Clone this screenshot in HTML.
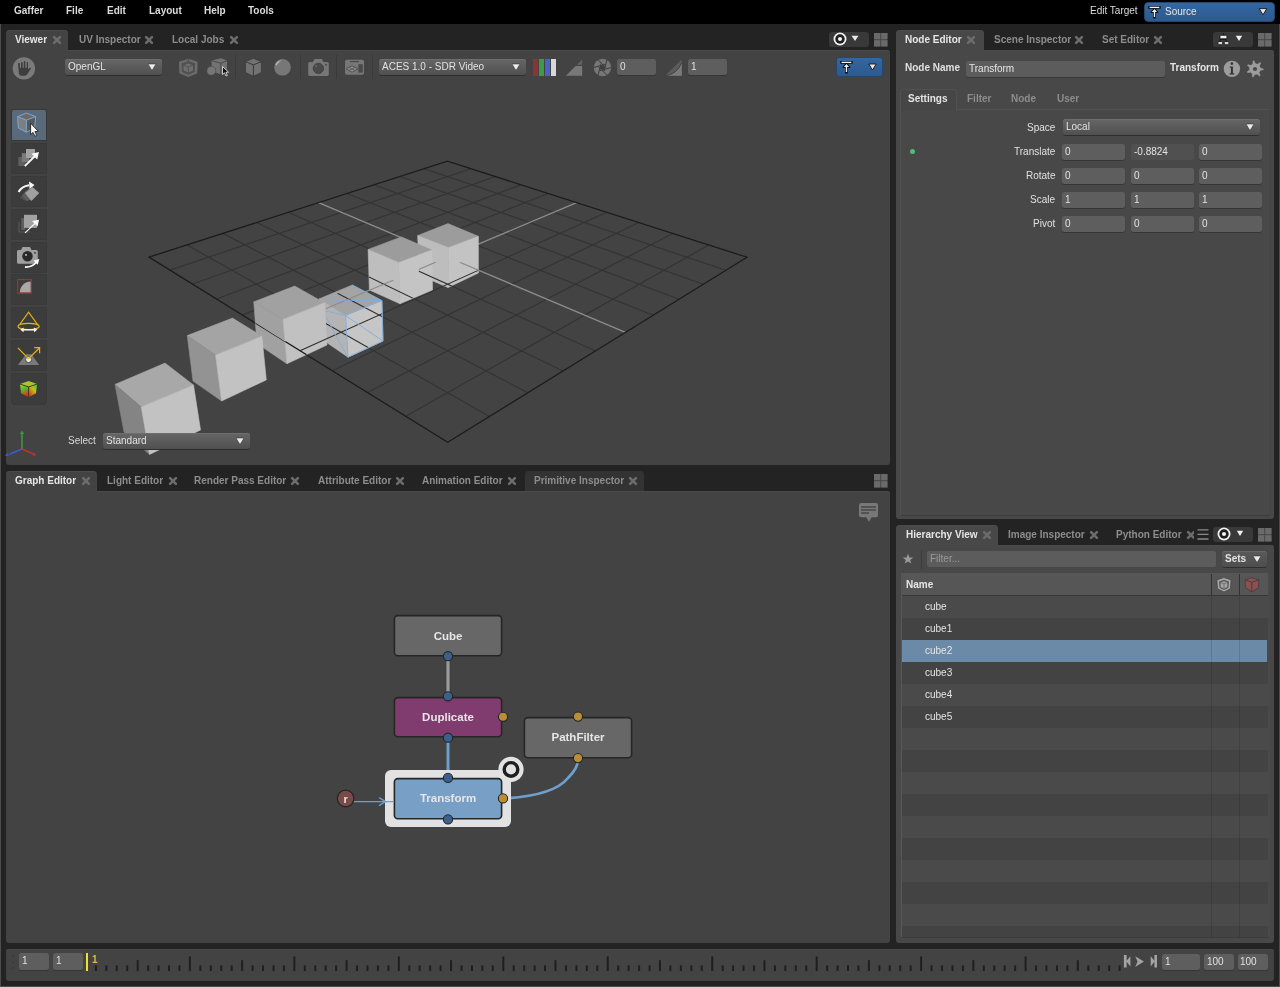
<!DOCTYPE html>
<html><head><meta charset="utf-8">
<style>
*{margin:0;padding:0;box-sizing:border-box}
html,body{width:1280px;height:987px;overflow:hidden;background:#232323;font-family:"Liberation Sans",sans-serif;font-size:10px;color:#e0e0e0}
.a{position:absolute}
.t{position:absolute;white-space:nowrap;font-family:"Liberation Sans",sans-serif;will-change:transform}
.wc{will-change:transform}
svg{overflow:visible}
</style></head><body>

<div class="a" style="left:0px;top:0px;width:1280px;height:24px;background:#000;"></div>
<div class="a" style="left:0px;top:24px;width:1px;height:963px;background:#4d4d4d;"></div>
<div class="a" style="left:1279px;top:24px;width:1px;height:963px;background:#4d4d4d;"></div>
<div class="a" style="left:0px;top:986px;width:1280px;height:1px;background:#4d4d4d;"></div>
<div class="t" style="left:14px;top:4.54px;line-height:12px;font-size:10px;color:#dcdcdc;font-weight:bold;">Gaffer</div>
<div class="t" style="left:66px;top:4.54px;line-height:12px;font-size:10px;color:#dcdcdc;font-weight:bold;">File</div>
<div class="t" style="left:107px;top:4.54px;line-height:12px;font-size:10px;color:#dcdcdc;font-weight:bold;">Edit</div>
<div class="t" style="left:149px;top:4.54px;line-height:12px;font-size:10px;color:#dcdcdc;font-weight:bold;">Layout</div>
<div class="t" style="left:204px;top:4.54px;line-height:12px;font-size:10px;color:#dcdcdc;font-weight:bold;">Help</div>
<div class="t" style="left:248px;top:4.54px;line-height:12px;font-size:10px;color:#dcdcdc;font-weight:bold;">Tools</div>
<div class="t" style="left:1090px;top:4.54px;line-height:12px;font-size:10px;color:#dcdcdc;">Edit Target</div>
<div class="a" style="left:1144px;top:2px;width:131px;height:20px;border-radius:4px;background:linear-gradient(#3466a0,#2d5a8e);border:1px solid #24476e"></div>
<div class="t" style="left:1165px;top:5.54px;line-height:12px;font-size:10px;color:#e6e6e6;">Source</div>
<svg class="a" style="left:1147.9px;top:5.1px" width="14" height="14" viewBox="0 0 14 14"><path d="M1.6 2.4 H11.3 M6.45 6.5 V12.1" stroke="#161616" stroke-width="2.9" stroke-linecap="square"/><path d="M6.45 3.2 L3.2 7.4 H9.7 Z" fill="#141414" stroke="#141414" stroke-width="1.4" stroke-linejoin="round"/><path d="M1.6 2.4 H11.3 M6.45 6.5 V12.1" stroke="#f2f2f2" stroke-width="1.3"/><path d="M6.45 3.9 L3.9 7.0 H9.0 Z" fill="#f2f2f2"/></svg>
<svg class="a" style="left:1258px;top:7px" width="10" height="9" viewBox="0 0 10 9"><path d="M1.2 1.6H8.8L5 7.8Z" fill="#e8e8e8" stroke="#151515" stroke-width="0.9" stroke-linejoin="round"/></svg>
<div class="a" style="left:6px;top:50px;width:884px;height:415px;background:#434343;border-radius:0 3px 3px 3px;box-shadow:inset 0 1px 0 #4a4a4a"></div>
<div class="a" style="left:6px;top:30px;width:62px;height:21px;background:#434343;border-radius:4px 4px 0 0;box-shadow:inset 0 1px 0 #4b4b4b"></div>
<div class="t" style="left:15px;top:33.53px;line-height:12px;font-size:10px;color:#e6e6e6;font-weight:bold;">Viewer</div>
<svg class="a" style="left:51.7px;top:35.2px" width="10" height="10" viewBox="0 0 10 10"><path d="M2.1 2.1L7.9 7.9M7.9 2.1L2.1 7.9" stroke="#6c6c6c" stroke-width="2.6" stroke-linecap="round"/></svg>
<div class="t" style="left:78.5px;top:33.53px;line-height:12px;font-size:10px;color:#8d8d8d;font-weight:bold;">UV Inspector</div>
<svg class="a" style="left:144.2px;top:35.2px" width="10" height="10" viewBox="0 0 10 10"><path d="M2.1 2.1L7.9 7.9M7.9 2.1L2.1 7.9" stroke="#6c6c6c" stroke-width="2.6" stroke-linecap="round"/></svg>
<div class="t" style="left:171.5px;top:33.53px;line-height:12px;font-size:10px;color:#8d8d8d;font-weight:bold;">Local Jobs</div>
<svg class="a" style="left:228.7px;top:35.2px" width="10" height="10" viewBox="0 0 10 10"><path d="M2.1 2.1L7.9 7.9M7.9 2.1L2.1 7.9" stroke="#6c6c6c" stroke-width="2.6" stroke-linecap="round"/></svg>
<div class="a" style="left:6px;top:491px;width:884px;height:452px;background:#434343;border-radius:0 3px 3px 3px;box-shadow:inset 0 1px 0 #4a4a4a"></div>
<div class="a" style="left:6px;top:471px;width:91px;height:21px;background:#434343;border-radius:4px 4px 0 0;box-shadow:inset 0 1px 0 #4b4b4b"></div>
<div class="t" style="left:15px;top:474.54px;line-height:12px;font-size:10px;color:#e6e6e6;font-weight:bold;">Graph Editor</div>
<svg class="a" style="left:80.7px;top:476.2px" width="10" height="10" viewBox="0 0 10 10"><path d="M2.1 2.1L7.9 7.9M7.9 2.1L2.1 7.9" stroke="#6c6c6c" stroke-width="2.6" stroke-linecap="round"/></svg>
<div class="t" style="left:107px;top:474.54px;line-height:12px;font-size:10px;color:#8d8d8d;font-weight:bold;">Light Editor</div>
<svg class="a" style="left:167.7px;top:476.2px" width="10" height="10" viewBox="0 0 10 10"><path d="M2.1 2.1L7.9 7.9M7.9 2.1L2.1 7.9" stroke="#6c6c6c" stroke-width="2.6" stroke-linecap="round"/></svg>
<div class="t" style="left:194px;top:474.54px;line-height:12px;font-size:10px;color:#8d8d8d;font-weight:bold;">Render Pass Editor</div>
<svg class="a" style="left:289.7px;top:476.2px" width="10" height="10" viewBox="0 0 10 10"><path d="M2.1 2.1L7.9 7.9M7.9 2.1L2.1 7.9" stroke="#6c6c6c" stroke-width="2.6" stroke-linecap="round"/></svg>
<div class="t" style="left:317.5px;top:474.54px;line-height:12px;font-size:10px;color:#8d8d8d;font-weight:bold;">Attribute Editor</div>
<svg class="a" style="left:394.7px;top:476.2px" width="10" height="10" viewBox="0 0 10 10"><path d="M2.1 2.1L7.9 7.9M7.9 2.1L2.1 7.9" stroke="#6c6c6c" stroke-width="2.6" stroke-linecap="round"/></svg>
<div class="t" style="left:421.5px;top:474.54px;line-height:12px;font-size:10px;color:#8d8d8d;font-weight:bold;">Animation Editor</div>
<svg class="a" style="left:506.7px;top:476.2px" width="10" height="10" viewBox="0 0 10 10"><path d="M2.1 2.1L7.9 7.9M7.9 2.1L2.1 7.9" stroke="#6c6c6c" stroke-width="2.6" stroke-linecap="round"/></svg>
<div class="a" style="left:525px;top:471px;width:119px;height:20px;background:#333;border-radius:4px 4px 0 0"></div>
<div class="t" style="left:533.5px;top:474.54px;line-height:12px;font-size:10px;color:#8d8d8d;font-weight:bold;">Primitive Inspector</div>
<svg class="a" style="left:627.7px;top:476.2px" width="10" height="10" viewBox="0 0 10 10"><path d="M2.1 2.1L7.9 7.9M7.9 2.1L2.1 7.9" stroke="#6c6c6c" stroke-width="2.6" stroke-linecap="round"/></svg>
<div class="a" style="left:896px;top:50px;width:378px;height:469px;background:#484848;border-radius:0 3px 3px 3px;box-shadow:inset 0 1px 0 #4a4a4a"></div>
<div class="a" style="left:896px;top:30px;width:88px;height:21px;background:#484848;border-radius:4px 4px 0 0;box-shadow:inset 0 1px 0 #4b4b4b"></div>
<div class="t" style="left:905px;top:33.53px;line-height:12px;font-size:10px;color:#e6e6e6;font-weight:bold;">Node Editor</div>
<svg class="a" style="left:965.7px;top:35.2px" width="10" height="10" viewBox="0 0 10 10"><path d="M2.1 2.1L7.9 7.9M7.9 2.1L2.1 7.9" stroke="#6c6c6c" stroke-width="2.6" stroke-linecap="round"/></svg>
<div class="t" style="left:993.5px;top:33.53px;line-height:12px;font-size:10px;color:#8d8d8d;font-weight:bold;">Scene Inspector</div>
<svg class="a" style="left:1073.7px;top:35.2px" width="10" height="10" viewBox="0 0 10 10"><path d="M2.1 2.1L7.9 7.9M7.9 2.1L2.1 7.9" stroke="#6c6c6c" stroke-width="2.6" stroke-linecap="round"/></svg>
<div class="t" style="left:1101.5px;top:33.53px;line-height:12px;font-size:10px;color:#8d8d8d;font-weight:bold;">Set Editor</div>
<svg class="a" style="left:1152.7px;top:35.2px" width="10" height="10" viewBox="0 0 10 10"><path d="M2.1 2.1L7.9 7.9M7.9 2.1L2.1 7.9" stroke="#6c6c6c" stroke-width="2.6" stroke-linecap="round"/></svg>
<div class="a" style="left:896px;top:545px;width:378px;height:398px;background:#484848;border-radius:0 3px 3px 3px;box-shadow:inset 0 1px 0 #4a4a4a"></div>
<div class="a" style="left:896px;top:525px;width:102px;height:21px;background:#484848;border-radius:4px 4px 0 0;box-shadow:inset 0 1px 0 #4b4b4b"></div>
<div class="t" style="left:905.5px;top:528.53px;line-height:12px;font-size:10px;color:#e6e6e6;font-weight:bold;">Hierarchy View</div>
<svg class="a" style="left:981.7px;top:530.2px" width="10" height="10" viewBox="0 0 10 10"><path d="M2.1 2.1L7.9 7.9M7.9 2.1L2.1 7.9" stroke="#6c6c6c" stroke-width="2.6" stroke-linecap="round"/></svg>
<div class="t" style="left:1008px;top:528.53px;line-height:12px;font-size:10px;color:#8d8d8d;font-weight:bold;">Image Inspector</div>
<svg class="a" style="left:1088.7px;top:530.2px" width="10" height="10" viewBox="0 0 10 10"><path d="M2.1 2.1L7.9 7.9M7.9 2.1L2.1 7.9" stroke="#6c6c6c" stroke-width="2.6" stroke-linecap="round"/></svg>
<div class="t" style="left:1116px;top:528.53px;line-height:12px;font-size:10px;color:#8d8d8d;font-weight:bold;">Python Editor</div>
<svg class="a" style="left:1185.7px;top:530.2px" width="10" height="10" viewBox="0 0 10 10"><path d="M2.1 2.1L7.9 7.9M7.9 2.1L2.1 7.9" stroke="#6c6c6c" stroke-width="2.6" stroke-linecap="round"/></svg>
<div class="a" style="left:1194px;top:528px;width:3px;height:14px;background:#232323;"></div>
<div class="a" style="left:6px;top:949px;width:1268px;height:32px;background:#434343;border-radius:3px;box-shadow:inset 0 1px 0 #4a4a4a"></div>
<svg class="a" style="left:0;top:0" width="890" height="464" viewBox="0 0 890 464">
<line x1="489.58" y1="416.39" x2="187.07" y2="244.88" stroke="#333" stroke-width="1.15"/>
<line x1="405.89" y1="416.30" x2="708.71" y2="244.98" stroke="#333" stroke-width="1.15"/>
<line x1="527.88" y1="392.72" x2="222.87" y2="233.38" stroke="#333" stroke-width="1.15"/>
<line x1="367.60" y1="392.57" x2="672.73" y2="233.44" stroke="#333" stroke-width="1.15"/>
<line x1="563.06" y1="370.97" x2="256.61" y2="222.54" stroke="#333" stroke-width="1.15"/>
<line x1="332.44" y1="370.79" x2="638.83" y2="222.58" stroke="#333" stroke-width="1.15"/>
<line x1="595.49" y1="350.92" x2="288.47" y2="212.32" stroke="#333" stroke-width="1.15"/>
<line x1="300.05" y1="350.71" x2="606.86" y2="212.33" stroke="#333" stroke-width="1.15"/>
<line x1="653.31" y1="315.17" x2="347.10" y2="193.49" stroke="#333" stroke-width="1.15"/>
<line x1="242.36" y1="314.96" x2="548.05" y2="193.48" stroke="#333" stroke-width="1.15"/>
<line x1="679.19" y1="299.17" x2="374.15" y2="184.80" stroke="#333" stroke-width="1.15"/>
<line x1="216.55" y1="298.97" x2="520.95" y2="184.79" stroke="#333" stroke-width="1.15"/>
<line x1="703.32" y1="284.25" x2="399.83" y2="176.56" stroke="#333" stroke-width="1.15"/>
<line x1="192.51" y1="284.06" x2="495.22" y2="176.55" stroke="#333" stroke-width="1.15"/>
<line x1="725.87" y1="270.31" x2="424.25" y2="168.72" stroke="#333" stroke-width="1.15"/>
<line x1="170.04" y1="270.14" x2="470.77" y2="168.71" stroke="#333" stroke-width="1.15"/>
<line x1="625.48" y1="332.37" x2="318.58" y2="202.65" stroke="#8c8c8c" stroke-width="1.3"/>
<line x1="270.11" y1="332.16" x2="576.65" y2="202.65" stroke="#8c8c8c" stroke-width="1.3"/>
<polygon points="447.75,442.25 747.00,257.25 447.50,161.25 149.00,257.10" fill="none" stroke="#1c1c1c" stroke-width="1.3"/>
<polygon points="448.00,223.60 478.40,236.30 448.50,247.60 417.70,235.60" fill="#9c9c9c" stroke="#9c9c9c" stroke-width="0.6" stroke-linejoin="round"/>
<polygon points="417.70,235.60 448.50,247.60 448.00,287.50 419.00,275.00" fill="#bdbdbd" stroke="#bdbdbd" stroke-width="0.6" stroke-linejoin="round"/>
<polygon points="448.50,247.60 478.40,236.30 478.40,273.00 448.00,287.50" fill="#c3c3c3" stroke="#c3c3c3" stroke-width="0.6" stroke-linejoin="round"/>
<polygon points="401.25,236.90 431.90,250.00 398.75,262.50 368.10,249.40" fill="#9c9c9c" stroke="#9c9c9c" stroke-width="0.6" stroke-linejoin="round"/>
<polygon points="368.10,249.40 398.75,262.50 400.00,303.75 369.40,290.00" fill="#bebebe" stroke="#bebebe" stroke-width="0.6" stroke-linejoin="round"/>
<polygon points="398.75,262.50 431.90,250.00 432.50,290.00 400.00,303.75" fill="#c4c4c4" stroke="#c4c4c4" stroke-width="0.6" stroke-linejoin="round"/>
<polygon points="352.25,285.00 381.90,300.60 345.60,315.60 319.40,298.75" fill="#a4a4a4" stroke="#a4a4a4" stroke-width="0.6" stroke-linejoin="round"/>
<polygon points="319.40,298.75 345.60,315.60 348.00,357.20 323.00,340.00" fill="#b4b4b4" stroke="#b4b4b4" stroke-width="0.6" stroke-linejoin="round"/>
<polygon points="345.60,315.60 381.90,300.60 383.00,341.00 348.00,357.20" fill="#c6c6c6" stroke="#c6c6c6" stroke-width="0.6" stroke-linejoin="round"/>
<polygon points="294.75,286.00 324.40,302.75 283.10,319.40 253.75,301.90" fill="#a1a1a1" stroke="#a1a1a1" stroke-width="0.6" stroke-linejoin="round"/>
<polygon points="253.75,301.90 283.10,319.40 286.90,363.75 257.00,343.50" fill="#a1a1a1" stroke="#a1a1a1" stroke-width="0.6" stroke-linejoin="round"/>
<polygon points="283.10,319.40 324.40,302.75 327.00,345.00 286.90,363.75" fill="#c1c1c1" stroke="#c1c1c1" stroke-width="0.6" stroke-linejoin="round"/>
<polygon points="232.50,318.10 261.90,336.25 215.60,355.00 187.25,335.60" fill="#a4a4a4" stroke="#a4a4a4" stroke-width="0.6" stroke-linejoin="round"/>
<polygon points="187.25,335.60 215.60,355.00 221.60,401.00 193.00,381.00" fill="#939393" stroke="#939393" stroke-width="0.6" stroke-linejoin="round"/>
<polygon points="215.60,355.00 261.90,336.25 266.30,379.90 221.60,401.00" fill="#c2c2c2" stroke="#c2c2c2" stroke-width="0.6" stroke-linejoin="round"/>
<polygon points="165.00,363.10 193.50,385.00 141.25,406.90 115.00,384.40" fill="#a8a8a8" stroke="#a8a8a8" stroke-width="0.6" stroke-linejoin="round"/>
<polygon points="115.00,384.40 141.25,406.90 149.50,454.50 124.00,432.00" fill="#848484" stroke="#848484" stroke-width="0.6" stroke-linejoin="round"/>
<polygon points="141.25,406.90 193.50,385.00 200.50,430.00 149.50,454.50" fill="#c2c2c2" stroke="#c2c2c2" stroke-width="0.6" stroke-linejoin="round"/>
<clipPath id="lowcubes"><polygon points="255.4,322.7 285,341.6 325.7,323.9 327,345 286.9,363.75 257,343.5"/><polygon points="368.75,269.7 399.4,283.1 432.2,270 432.5,290 400,303.75 369.4,290"/><polygon points="418.4,255.3 448.25,267.5 478.4,254.6 478.4,273 448,287.5 419,275"/><polygon points="352.25,285 381.9,300.6 383,341 348,357.2 326,340 326,300"/></clipPath>
<g clip-path="url(#lowcubes)">
<line x1="489.58" y1="416.39" x2="187.07" y2="244.88" stroke="#2c2c2c" stroke-width="1.1"/>
<line x1="405.89" y1="416.30" x2="708.71" y2="244.98" stroke="#2c2c2c" stroke-width="1.1"/>
<line x1="527.88" y1="392.72" x2="222.87" y2="233.38" stroke="#2c2c2c" stroke-width="1.1"/>
<line x1="367.60" y1="392.57" x2="672.73" y2="233.44" stroke="#2c2c2c" stroke-width="1.1"/>
<line x1="563.06" y1="370.97" x2="256.61" y2="222.54" stroke="#2c2c2c" stroke-width="1.1"/>
<line x1="332.44" y1="370.79" x2="638.83" y2="222.58" stroke="#2c2c2c" stroke-width="1.1"/>
<line x1="595.49" y1="350.92" x2="288.47" y2="212.32" stroke="#2c2c2c" stroke-width="1.1"/>
<line x1="300.05" y1="350.71" x2="606.86" y2="212.33" stroke="#2c2c2c" stroke-width="1.1"/>
<line x1="625.48" y1="332.37" x2="318.58" y2="202.65" stroke="#8a8a8a" stroke-width="1.1"/>
<line x1="270.11" y1="332.16" x2="576.65" y2="202.65" stroke="#8a8a8a" stroke-width="1.1"/>
<line x1="653.31" y1="315.17" x2="347.10" y2="193.49" stroke="#2c2c2c" stroke-width="1.1"/>
<line x1="242.36" y1="314.96" x2="548.05" y2="193.48" stroke="#2c2c2c" stroke-width="1.1"/>
<line x1="679.19" y1="299.17" x2="374.15" y2="184.80" stroke="#2c2c2c" stroke-width="1.1"/>
<line x1="216.55" y1="298.97" x2="520.95" y2="184.79" stroke="#2c2c2c" stroke-width="1.1"/>
<line x1="703.32" y1="284.25" x2="399.83" y2="176.56" stroke="#2c2c2c" stroke-width="1.1"/>
<line x1="192.51" y1="284.06" x2="495.22" y2="176.55" stroke="#2c2c2c" stroke-width="1.1"/>
<line x1="725.87" y1="270.31" x2="424.25" y2="168.72" stroke="#2c2c2c" stroke-width="1.1"/>
<line x1="170.04" y1="270.14" x2="470.77" y2="168.71" stroke="#2c2c2c" stroke-width="1.1"/>
<polygon points="447.75,442.25 747.00,257.25 447.50,161.25 149.00,257.10" fill="none" stroke="#1c1c1c" stroke-width="1.3"/>
</g>
<path d="M352.25 285 L381.9 300.6 L345.6 315.6 L326 311 M326 300 L381.9 300.6 M345.6 315.6 L348 357.2 M381.9 300.6 L383 341 L348 357.2 M345.6 315.6 L383 341 M326 317 L347 356" stroke="#7eaee0" stroke-width="0.9" fill="none"/>
</svg>
<div class="a" style="left:829px;top:32px;width:40px;height:15px;background:#393939;border-radius:3px"></div>
<svg class="a" style="left:832.5px;top:32.4px" width="14" height="14" viewBox="0 0 14 14"><circle cx="7" cy="7" r="6.5" fill="#f0f0f0"/><circle cx="7" cy="7" r="4.7" fill="#1c1c1c"/><circle cx="7" cy="7" r="2.1" fill="#f0f0f0"/></svg>
<svg class="a" style="left:851px;top:35px" width="8" height="7" viewBox="0 0 8 7"><path d="M0.5 0.8H7.5L4 6Z" fill="#e6e6e6"/></svg>
<svg class="a" style="left:873.7px;top:32.8px" width="14" height="14" viewBox="0 0 14 14"><rect x="0" y="0" width="13.5" height="13.5" fill="#474747"/><rect x="0" y="0" width="6.2" height="6.2" fill="#6a6a6a"/><rect x="7.2" y="0" width="6.3" height="6.2" fill="#6a6a6a"/><rect x="0" y="7.2" width="6.2" height="6.3" fill="#6a6a6a"/><rect x="7.2" y="7.2" width="6.3" height="6.3" fill="#6a6a6a"/></svg>
<svg class="a" style="left:12px;top:57px" width="24" height="24" viewBox="0 0 24 24">
<circle cx="11.9" cy="11.4" r="11.2" fill="#7a7a7a"/>
<path d="M6 6.6 Q6 6.1 6.9 6.1 Q7.9 6.1 7.9 6.6 L7.9 10.8 L9.1 10.8 L9.1 5.5 Q9.1 5 9.9 5 Q10.7 5 10.7 5.5 L10.7 10.8 L11.8 10.8 L11.8 4.6 Q11.8 4.1 12.55 4.1 Q13.3 4.1 13.3 4.6 L13.3 10.8 L14.75 10.8 L14.75 5.5 Q14.75 5 15.4 5 Q16 5 16 5.5 L16 12.2 L18.3 10.6 L19 11.3 L15.8 16.6 Q14.8 18.8 12.6 18.8 L9.6 18.8 Q7.3 18.8 6.9 16.4 Z" fill="#3d3d3d"/>
</svg>
<div class="a" style="left:65px;top:59px;width:97px;height:16px;border-radius:3px;background:linear-gradient(#666,#505050);box-shadow:0 1px 0 #2e2e2e, inset 0 1px 0 #6e6e6e"></div>
<div class="t" style="left:68px;top:61.03px;line-height:12px;font-size:10px;color:#e2e2e2;">OpenGL</div>
<svg class="a" style="left:147px;top:63px" width="10" height="9" viewBox="0 0 10 9"><path d="M1 1H9L5 7.5Z" fill="#ececec" stroke="#2a2a2a" stroke-width="0.5"/></svg>
<svg class="a" style="left:178px;top:58px" width="21" height="20" viewBox="0 0 21 20">
<path d="M10.3 0.8 L19.6 3.8 L19.3 15.2 L10.3 19 L1.3 15.2 L1 3.8 Z" fill="#6c6c6c"/>
<path d="M10.3 3 L17 5.2 L16.8 14 L10.3 16.8 L3.8 14 L3.6 5.2 Z" fill="#505050"/>
<path d="M10.3 5.5 L15 7.2 L15 12.6 L10.3 14.5 L5.6 12.6 L5.6 7.2 Z" fill="#6e6e6e"/>
<path d="M5.6 7.2 L10.3 9 L15 7.2 M10.3 9 V14.5" stroke="#505050" stroke-width="0.9" fill="none"/>
<path d="M10.3 0.8 V3" stroke="#444" stroke-width="0.8"/>
</svg>
<svg class="a" style="left:205px;top:57px" width="24" height="20" viewBox="0 0 24 20">
<path d="M16 1.2 L22 3.6 L22 14.5 L16 17.2 L7 14.5 L6.4 3.6 Z" fill="#727272"/>
<path d="M6.4 3.6 L15.8 6.2 L22 3.6 M15.8 6.2 V17" stroke="#454545" stroke-width="0.9" fill="none"/>
<circle cx="6.3" cy="13.8" r="4.5" fill="#767676" stroke="#444" stroke-width="0.6"/>
</svg>
<svg class="a" style="left:222px;top:66px" width="8" height="11" viewBox="0 0 8 11"><path d="M0.5 0.5 L0.5 8.5 L2.5 6.8 L4 10 L5.3 9.4 L3.9 6.3 L6.6 6.2 Z" fill="#111" stroke="#eee" stroke-width="0.8"/></svg>
<div class="a" style="left:235px;top:55px;width:1px;height:24px;background:#3a3a3a;"></div>
<svg class="a" style="left:244px;top:57px" width="19" height="20" viewBox="0 0 19 20">
<path d="M9.4 1.3 L17.4 4.6 L17.4 15.5 L9.4 19.3 L1.4 15.5 L1.4 4.6 Z" fill="#727272" stroke="#3a3a3a" stroke-width="0.8"/>
<path d="M1.4 4.6 L9.4 7.9 L17.4 4.6 M9.4 7.9 V19.3" stroke="#3a3a3a" stroke-width="1" fill="none"/>
</svg>
<svg class="a" style="left:273px;top:58px" width="19" height="19" viewBox="0 0 19 19">
<circle cx="9.5" cy="9.3" r="8.7" fill="#777" stroke="#3a3a3a" stroke-width="0.6"/>
<path d="M2.4 6.5 Q4.5 2.6 9 2.3 Q5.5 3.8 3.2 7.7 Z" fill="#b5b5b5"/>
</svg>
<div class="a" style="left:300px;top:55px;width:1px;height:24px;background:#3a3a3a;"></div>
<svg class="a" style="left:307px;top:58px" width="23" height="19" viewBox="0 0 23 19">
<path d="M1.2 5.5 Q1.2 4 2.7 4 L5.8 4 L7.6 1 L14.8 1 L16.6 4 L20.3 4 Q21.8 4 21.8 5.5 L21.8 16.6 Q21.8 18 20.3 18 L2.7 18 Q1.2 18 1.2 16.6 Z" fill="#777"/>
<circle cx="11.4" cy="10.4" r="5.2" fill="#4a4a4a" stroke="#333" stroke-width="0.6"/>
<circle cx="19" cy="6.8" r="1" fill="#4a4a4a"/>
<path d="M8.4 8 h1.4 M9.1 7.3 v1.4" stroke="#999" stroke-width="0.5"/>
</svg>
<div class="a" style="left:336px;top:55px;width:1px;height:24px;background:#3a3a3a;"></div>
<svg class="a" style="left:344px;top:59px" width="21" height="17" viewBox="0 0 21 17">
<rect x="1" y="0.8" width="19" height="15" rx="1.8" fill="#777"/>
<rect x="6" y="2" width="9" height="1.1" fill="#474747"/>
<rect x="14.4" y="5.2" width="4.4" height="8.4" fill="#4a4a4a"/>
<path d="M2.2 9.8 L8 6.8 L14 9.8 L8 13.2 Z" fill="#909090" stroke="#454545" stroke-width="0.8"/>
<path d="M5 8.3 L11 11.5 M11 8.3 L5 11.5" stroke="#454545" stroke-width="0.7"/>
</svg>
<div class="a" style="left:372px;top:55px;width:1px;height:24px;background:#3a3a3a;"></div>
<div class="a" style="left:379px;top:59px;width:147px;height:16px;border-radius:3px;background:linear-gradient(#666,#505050);box-shadow:0 1px 0 #2e2e2e, inset 0 1px 0 #6e6e6e"></div>
<div class="t" style="left:382px;top:61.03px;line-height:12px;font-size:10px;color:#e2e2e2;">ACES 1.0 - SDR Video</div>
<svg class="a" style="left:511px;top:63px" width="10" height="9" viewBox="0 0 10 9"><path d="M1 1H9L5 7.5Z" fill="#ececec" stroke="#2a2a2a" stroke-width="0.5"/></svg>
<div class="a" style="left:533px;top:59px;width:5px;height:17px;background:#8e3333;"></div>
<div class="a" style="left:539px;top:59px;width:5px;height:17px;background:#3f9a48;"></div>
<div class="a" style="left:545px;top:59px;width:5px;height:17px;background:#4863c4;"></div>
<div class="a" style="left:551px;top:59px;width:5px;height:17px;background:#d8d8d8;"></div>
<svg class="a" style="left:565px;top:59px" width="18" height="17" viewBox="0 0 18 17"><path d="M17.2 0.5 V5.8 H11.9 Z" fill="#626262"/><path d="M10.6 7.1 H17.2 V16.8 H0.9 Z" fill="#787878"/></svg>
<svg class="a" style="left:593px;top:58px" width="19" height="19" viewBox="0 0 19 19">
<circle cx="9.5" cy="9.5" r="8.7" fill="#767676"/>
<g stroke="#3e3e3e" stroke-width="1" fill="none"><path d="M5.10 1.88 L13.65 10.29"/><path d="M13.90 1.88 L10.89 13.49"/><path d="M18.30 9.50 L6.74 12.70"/><path d="M13.90 17.12 L5.35 8.71"/><path d="M5.10 17.12 L8.11 5.51"/><path d="M0.70 9.50 L12.26 6.30"/></g>
<circle cx="9.5" cy="9.5" r="2.3" fill="#3e3e3e"/>
</svg>
<div class="a" style="left:617px;top:59px;width:39px;height:16px;border-radius:2.5px;background:#5e5e5e;box-shadow:0 1px 0 #353535"></div>
<div class="t" style="left:620px;top:61.03px;line-height:12px;font-size:10px;color:#e0e0e0;">0</div>
<svg class="a" style="left:664px;top:59px" width="19" height="17" viewBox="0 0 19 17"><path d="M1 16.8 L17.8 0.6 L17.8 16.8 Z" fill="#5c5c5c"/><path d="M1 16.8 Q13 15.5 17.8 3.5 L17.8 16.8 Z" fill="#7a7a7a"/><path d="M1 16.8 Q13 15.5 17.8 3.5" stroke="#3c3c3c" stroke-width="0.9" fill="none"/></svg>
<div class="a" style="left:688px;top:59px;width:39px;height:16px;border-radius:2.5px;background:#5e5e5e;box-shadow:0 1px 0 #353535"></div>
<div class="t" style="left:691px;top:61.03px;line-height:12px;font-size:10px;color:#e0e0e0;">1</div>
<div class="a" style="left:836px;top:57px;width:47px;height:20px;border-radius:3px;background:linear-gradient(#3466a0,#2d5a8e);border:1px solid #24476e"></div>
<svg class="a" style="left:840px;top:60px" width="14" height="14" viewBox="0 0 14 14"><path d="M1.6 2.4 H11.3 M6.45 6.5 V12.1" stroke="#161616" stroke-width="2.9" stroke-linecap="square"/><path d="M6.45 3.2 L3.2 7.4 H9.7 Z" fill="#141414" stroke="#141414" stroke-width="1.4" stroke-linejoin="round"/><path d="M1.6 2.4 H11.3 M6.45 6.5 V12.1" stroke="#f2f2f2" stroke-width="1.3"/><path d="M6.45 3.9 L3.9 7.0 H9.0 Z" fill="#f2f2f2"/></svg>
<svg class="a" style="left:868px;top:63px" width="9" height="8" viewBox="0 0 9 8"><path d="M0.8 1H8.2L4.5 7Z" fill="#eaeaea" stroke="#141414" stroke-width="0.9" stroke-linejoin="round"/></svg>
<div class="a" style="left:11px;top:109px;width:36px;height:32px;border-radius:3px 3px 1px 1px;background:#383838"></div>
<div class="a" style="left:12px;top:110px;width:34px;height:30px;border-radius:2px 2px 0 0;background:#596a7a"></div>
<div class="a" style="left:11px;top:143px;width:36px;height:31px;border-radius:1px;background:#3c3c3c;border:1px solid #393939"></div>
<div class="a" style="left:11px;top:176px;width:36px;height:31px;border-radius:1px;background:#3c3c3c;border:1px solid #393939"></div>
<div class="a" style="left:11px;top:209px;width:36px;height:31px;border-radius:1px;background:#3c3c3c;border:1px solid #393939"></div>
<div class="a" style="left:11px;top:242px;width:36px;height:31px;border-radius:1px;background:#3c3c3c;border:1px solid #393939"></div>
<div class="a" style="left:11px;top:274px;width:36px;height:31px;border-radius:1px;background:#3c3c3c;border:1px solid #393939"></div>
<div class="a" style="left:11px;top:307px;width:36px;height:31px;border-radius:1px;background:#3c3c3c;border:1px solid #393939"></div>
<div class="a" style="left:11px;top:340px;width:36px;height:31px;border-radius:1px;background:#3c3c3c;border:1px solid #393939"></div>
<div class="a" style="left:11px;top:373px;width:36px;height:32px;border-radius:1px 1px 4px 4px;background:#3c3c3c;border:1px solid #393939"></div>
<svg class="a" style="left:0;top:0" width="50" height="410" viewBox="0 0 50 410">
<defs>
<linearGradient id="cg" x1="0" y1="0" x2="0.3" y2="1"><stop offset="0" stop-color="#e0d020"/><stop offset="0.35" stop-color="#50d030"/><stop offset="1" stop-color="#e03010"/></linearGradient>
<linearGradient id="cg2" x1="1" y1="0" x2="0.2" y2="1"><stop offset="0" stop-color="#40c830"/><stop offset="0.45" stop-color="#c0c020"/><stop offset="1" stop-color="#e03010"/></linearGradient>
</defs>
<path d="M26.4 113.1 L35.7 116.6 L26.4 120.2 L17.6 116.6 Z" fill="#6a6a6a"/>
<path d="M17.6 116.6 L26.4 120.2 L26.4 132.2 L18.3 128 Z" fill="#7e7e7e"/>
<path d="M26.4 120.2 L35.7 116.6 L34.6 128 L26.4 132.2 Z" fill="#575757"/>
<path d="M26.4 113.1 L35.7 116.6 L34.6 128 L26.4 132.2 L18.3 128 L17.6 116.6 Z M17.6 116.6 L26.4 120.2 L35.7 116.6 M26.4 120.2 V132.2" fill="none" stroke="#78aee0" stroke-width="0.9" stroke-linejoin="round"/>
<path d="M30.6 123.2 L30.6 134.6 L33 132.4 L35 136.3 L36.8 135.4 L34.9 131.6 L38.2 131.2 Z" fill="#fafafa" stroke="#222" stroke-width="0.9" stroke-linejoin="round"/>

<rect x="18.3" y="157" width="7.5" height="9" fill="#5e5e5e"/>
<rect x="21.8" y="153.2" width="7.5" height="8.8" fill="#7a7a7a"/>
<rect x="26" y="149" width="9" height="9" fill="#a2a2a2"/>
<path d="M24.8 166.2 L36 155" stroke="#fafafa" stroke-width="1.8"/>
<path d="M39 152 L31.5 153.8 L37.2 159.5 Z" fill="#fafafa"/>

<path d="M20 198 L26 190 L32 198 L26 201 Z" fill="#505050"/>
<path d="M22 196 L29 188 L33 199 L27 201 Z" fill="#5e5e5e"/>
<path d="M25 193.1 L32.5 187 L39.2 193.1 L31.4 201 Z" fill="#a0a0a0"/>
<path d="M18.6 192 Q21.5 186.3 29 185.2" stroke="#fafafa" stroke-width="2" fill="none"/>
<path d="M34.5 185 L29 181.6 L29.5 189 Z" fill="#fafafa"/>

<path d="M19 222 V232 H30" stroke="#555" stroke-width="1.2" fill="none"/>
<rect x="21.3" y="218" width="4" height="12" fill="#5e5e5e"/>
<rect x="24" y="214.8" width="13" height="13.1" fill="#a2a2a2"/>
<path d="M25 232.9 L36 222.5" stroke="#fafafa" stroke-width="1.1"/>
<path d="M39 219.8 L32 221 L37.6 226.6 Z" fill="#fafafa"/>

<path d="M17 251.5 Q17 250 18.5 250 L21 250 L22.5 247 L30 247 L31.5 250 L36.3 250 Q37.8 250 37.8 251.5 L37.8 262.3 Q37.8 263.8 36.3 263.8 L18.5 263.8 Q17 263.8 17 262.3 Z" fill="#a0a0a0"/>
<circle cx="27.5" cy="256.3" r="5.2" fill="#2a2a2a"/>
<rect x="25.2" y="254.1" width="1.6" height="1.6" fill="#ddd"/>
<circle cx="35" cy="252.8" r="0.9" fill="#333"/>
<path d="M25 267 Q32 267.5 36.5 262" stroke="#fafafa" stroke-width="1.8" fill="none"/>
<path d="M39.3 259 L33.6 260.5 L37.8 264.7 Z" fill="#fafafa"/>

<path d="M30.8 281.6 A11 11 0 0 0 19.8 292.6 L30.8 292.6 Z" fill="#a8a8a8"/>
<rect x="17.7" y="279.6" width="13.6" height="13.6" fill="none" stroke="#d02424" stroke-width="1"/>

<path d="M19.6 324.6 L28.6 312.1 L37.6 324.6" stroke="#e2b41c" stroke-width="1.1" fill="none"/>
<ellipse cx="28.6" cy="326.4" rx="10.6" ry="3.1" fill="none" stroke="#e2b41c" stroke-width="1.2"/>
<path d="M22 329.8 H35.5" stroke="#f4f4f4" stroke-width="1.5"/>
<path d="M20.3 329.8 L23.6 327.4 L23.6 332.2 Z M37.3 329.8 L34 327.4 L34 332.2 Z" fill="#f4f4f4"/>

<path d="M26.1 354.3 L31.4 354.3 L39.2 365 L17.9 365 Z" fill="#7a7a7a"/>
<circle cx="28.6" cy="359.6" r="3" fill="#e8e8e8" stroke="#333" stroke-width="0.8"/>
<path d="M17.9 347.9 L28.6 358.6 L39.4 348" stroke="#e2b41c" stroke-width="1.2" fill="none"/>
<path d="M34.2 347.6 L39.6 347.6 L39.6 353.2" stroke="#e2b41c" stroke-width="1.2" fill="none"/>

<path d="M28.6 380.9 L37.1 384.1 L28.6 386.9 L20 384.1 Z" fill="#b0c030"/>
<path d="M20 384.1 L28.6 386.9 L28.6 397.2 L21.1 393.3 Z" fill="url(#cg)"/>
<path d="M28.6 386.9 L37.1 384.1 L36 393.3 L28.6 397.2 Z" fill="url(#cg2)"/>
<path d="M20 384.1 L28.6 386.9 L37.1 384.1 M28.6 386.9 V397.2" stroke="#2e3a20" stroke-width="0.9" fill="none"/>
</svg>
<svg class="a" style="left:0px;top:425px" width="40" height="35" viewBox="0 0 40 35">
<path d="M22 24 V8" stroke="#3a9a3a" stroke-width="1.6"/><path d="M19.8 9 L22 5.5 L24.2 9 Z" fill="#3a9a3a"/>
<path d="M22 24 L9.5 29.2" stroke="#3a5ad0" stroke-width="1.6"/><path d="M8 28 L4.5 30.5 L9 31 Z" fill="#3a5ad0"/>
<path d="M22 24 L34 29.2" stroke="#c03030" stroke-width="1.6"/><path d="M33.5 27.5 L36.5 30 L32.8 31 Z" fill="#c03030"/>
</svg>
<div class="t" style="left:68px;top:435.04px;line-height:12px;font-size:10px;color:#d8d8d8;">Select</div>
<div class="a" style="left:103px;top:433px;width:147px;height:16px;border-radius:3px;background:linear-gradient(#666,#505050);box-shadow:0 1px 0 #2e2e2e, inset 0 1px 0 #6e6e6e"></div>
<div class="t" style="left:106px;top:435.04px;line-height:12px;font-size:10px;color:#e2e2e2;">Standard</div>
<svg class="a" style="left:235px;top:437px" width="10" height="9" viewBox="0 0 10 9"><path d="M1 1H9L5 7.5Z" fill="#ececec" stroke="#2a2a2a" stroke-width="0.5"/></svg>
<svg class="a" style="left:873.8px;top:473.7px" width="14" height="14" viewBox="0 0 14 14"><rect x="0" y="0" width="13.5" height="13.5" fill="#474747"/><rect x="0" y="0" width="6.2" height="6.2" fill="#6a6a6a"/><rect x="7.2" y="0" width="6.3" height="6.2" fill="#6a6a6a"/><rect x="0" y="7.2" width="6.2" height="6.3" fill="#6a6a6a"/><rect x="7.2" y="7.2" width="6.3" height="6.3" fill="#6a6a6a"/></svg>
<svg class="a" style="left:858px;top:502px" width="22" height="21" viewBox="0 0 22 21">
<path d="M1 3 Q1 1 3 1 L18 1 Q20 1 20 3 L20 13.3 Q20 15.3 18 15.3 L13.6 15.3 L11 20 L8.4 15.3 L3 15.3 Q1 15.3 1 13.3 Z" fill="#787878"/>
<path d="M3 5 H18 M3 8 H18 M3 11 H11" stroke="#474747" stroke-width="1.5"/>
</svg>
<svg class="a wc" style="left:0;top:0" width="890" height="943" viewBox="0 0 890 943">
<line x1="448" y1="660" x2="448" y2="692" stroke="#3a3a3a" stroke-width="4.6"/>
<line x1="448" y1="660" x2="448" y2="692" stroke="#9c9c9c" stroke-width="3.2"/>
<line x1="448" y1="741" x2="448" y2="773" stroke="#6f9fcb" stroke-width="3"/>
<path d="M507 798.4 C540 796 560 788 568 778 C576 770 578 764 578 760" stroke="#6f9fcb" stroke-width="2.8" fill="none"/>
<rect x="385" y="770" width="126" height="57" rx="6" fill="#e2e2e2"/>
<circle cx="511" cy="769.4" r="12.6" fill="#e2e2e2"/>
<circle cx="511" cy="769.4" r="6.8" fill="#e2e2e2" stroke="#1e1e1e" stroke-width="3.4"/>
<rect x="394.4" y="615.6" width="107.2" height="40.2" rx="3.5" fill="#676767" stroke="#262626" stroke-width="1.6"/>
<text x="448" y="639.5" text-anchor="middle" font-family="Liberation Sans" font-weight="bold" font-size="11.5" fill="#e6e6e6">Cube</text>
<rect x="394.4" y="697.6" width="107.2" height="39.2" rx="3.5" fill="#813c6f" stroke="#262626" stroke-width="1.6"/>
<text x="448" y="720.7" text-anchor="middle" font-family="Liberation Sans" font-weight="bold" font-size="11.5" fill="#e6e6e6">Duplicate</text>
<rect x="394.4" y="778.6" width="107.2" height="40.2" rx="3.5" fill="#789fc5" stroke="#262626" stroke-width="1.6"/>
<text x="448" y="802" text-anchor="middle" font-family="Liberation Sans" font-weight="bold" font-size="11.5" fill="#e6e6e6">Transform</text>
<rect x="524.4" y="717.6" width="107.2" height="40.2" rx="3.5" fill="#676767" stroke="#262626" stroke-width="1.6"/>
<text x="578" y="741.3" text-anchor="middle" font-family="Liberation Sans" font-weight="bold" font-size="11.5" fill="#e6e6e6">PathFilter</text>
<line x1="353" y1="801.6" x2="394" y2="801.6" stroke="#6f9fcb" stroke-width="1.4"/>
<path d="M379 797.5 L385.5 801.6 L379 805.7" stroke="#6f9fcb" stroke-width="1.4" fill="none"/>
<circle cx="345.6" cy="798.5" r="8.3" fill="#7a4a48" stroke="#242424" stroke-width="1.2"/>
<text x="345.6" y="802.5" text-anchor="middle" font-family="Liberation Sans" font-weight="bold" font-size="11" fill="#e6e6e6">r</text>
<circle cx="448" cy="656.2" r="4.6" fill="#3c5f8c" stroke="#252525" stroke-width="1.1"/>
<circle cx="448" cy="696.3" r="4.6" fill="#3c5f8c" stroke="#252525" stroke-width="1.1"/>
<circle cx="448" cy="737.7" r="4.6" fill="#3c5f8c" stroke="#252525" stroke-width="1.1"/>
<circle cx="448" cy="777.9" r="4.6" fill="#3c5f8c" stroke="#252525" stroke-width="1.1"/>
<circle cx="448" cy="819.4" r="4.6" fill="#3c5f8c" stroke="#252525" stroke-width="1.1"/>
<circle cx="503" cy="716.8" r="4.6" fill="#b88f38" stroke="#252525" stroke-width="1.1"/>
<circle cx="578" cy="716.6" r="4.6" fill="#b88f38" stroke="#252525" stroke-width="1.1"/>
<circle cx="578" cy="758.1" r="4.6" fill="#b88f38" stroke="#252525" stroke-width="1.1"/>
<circle cx="503" cy="798.4" r="4.6" fill="#b88f38" stroke="#252525" stroke-width="1.1"/>
</svg>
<div class="a" style="left:1213px;top:32px;width:40px;height:15px;background:#393939;border-radius:3px"></div>
<svg class="a" style="left:1216px;top:32px" width="16" height="14" viewBox="0 0 16 14">
<path d="M7.4 1 V3.3 M4 8.6 V10 M10 8.6 V10 M4 13 V14 M10 13 V14 M4 9.5 V7.4 H10 V9.5 M7.4 6.7 V7.4" stroke="#111" stroke-width="0.8" fill="none"/>
<rect x="4" y="3.3" width="6.9" height="3.5" rx="0.8" fill="#f0f0f0" stroke="#111" stroke-width="0.8"/>
<rect x="2" y="9.5" width="4.6" height="3.2" rx="0.8" fill="#d8d8d8" stroke="#111" stroke-width="0.8"/>
<rect x="8.4" y="9.5" width="4.4" height="3.2" rx="0.8" fill="#d8d8d8" stroke="#111" stroke-width="0.8"/>
</svg>
<svg class="a" style="left:1235px;top:35px" width="8" height="7" viewBox="0 0 8 7"><path d="M0.8 0.8H7.2L4 6Z" fill="#f0f0f0"/></svg>
<svg class="a" style="left:1257.5px;top:33px" width="14" height="14" viewBox="0 0 14 14"><rect x="0" y="0" width="13.5" height="13.5" fill="#474747"/><rect x="0" y="0" width="6.2" height="6.2" fill="#6a6a6a"/><rect x="7.2" y="0" width="6.3" height="6.2" fill="#6a6a6a"/><rect x="0" y="7.2" width="6.2" height="6.3" fill="#6a6a6a"/><rect x="7.2" y="7.2" width="6.3" height="6.3" fill="#6a6a6a"/></svg>
<div class="t" style="left:905px;top:62.03px;line-height:12px;font-size:10px;color:#e0e0e0;font-weight:bold;">Node Name</div>
<div class="a" style="left:966px;top:60.5px;width:199px;height:16.5px;border-radius:2.5px;background:#5c5c5c;box-shadow:0 1px 0 #383838"></div>
<div class="t" style="left:968.5px;top:62.53px;line-height:12px;font-size:10px;color:#e4e4e4;">Transform</div>
<div class="t" style="left:1170px;top:62.03px;line-height:12px;font-size:10px;color:#e6e6e6;font-weight:bold;">Transform</div>
<svg class="a" style="left:1223px;top:60px" width="18" height="18" viewBox="0 0 18 18">
<circle cx="8.9" cy="8.9" r="8.2" fill="#9c9c9c"/>
<circle cx="8.9" cy="3.6" r="1.3" fill="#333"/>
<path d="M6.8 6.6 H9.9 V13.2 H11.2 V14.4 H6.6 V13.2 H7.9 V7.8 H6.8 Z" fill="#333"/>
</svg>
<svg class="a" style="left:1246px;top:59.7px" width="18" height="18" viewBox="0 0 18 18"><path d="M6.84 4.16 L7.03 0.94 L8.01 0.76 L9.32 3.71 L11.44 4.30 L14.08 2.43 L14.83 3.09 L13.34 5.95 L14.20 7.97 L17.30 8.88 L17.25 9.87 L14.09 10.49 L13.04 12.43 L14.27 15.41 L13.46 16.00 L11.01 13.91 L8.84 14.30 L7.27 17.12 L6.31 16.85 L6.41 13.63 L4.76 12.18 L1.58 12.71 L1.19 11.80 L3.77 9.86 L3.87 7.67 L1.47 5.51 L1.94 4.63 L5.06 5.45Z" fill="#9c9c9c" stroke="#9c9c9c" stroke-width="0.5" stroke-linejoin="round"/><circle cx="9" cy="9" r="5.4" fill="#9c9c9c"/><circle cx="9" cy="9" r="2.1" fill="#484848"/></svg>
<div class="a" style="left:899.5px;top:109px;width:371px;height:406.5px;border:1px solid #515151;border-bottom-color:#3c3c3c;border-right-color:#444;border-radius:0 3px 3px 3px"></div>
<div class="a" style="left:899.5px;top:89px;width:57.5px;height:21.5px;border:1px solid #515151;border-bottom:none;border-radius:4px 4px 0 0;background:#464646"></div>
<div class="t" style="left:908px;top:92.83px;line-height:12px;font-size:10px;color:#e4e4e4;font-weight:bold;">Settings</div>
<div class="t" style="left:967px;top:92.83px;line-height:12px;font-size:10px;color:#8d8d8d;font-weight:bold;">Filter</div>
<div class="t" style="left:1011px;top:92.83px;line-height:12px;font-size:10px;color:#8d8d8d;font-weight:bold;">Node</div>
<div class="t" style="left:1056.5px;top:92.83px;line-height:12px;font-size:10px;color:#8d8d8d;font-weight:bold;">User</div>
<div class="a" style="left:910px;top:149.2px;width:5px;height:5px;border-radius:2.5px;background:#4fbf74"></div>
<div class="t" style="right:224.70000000000005px;text-align:right;top:121.94px;line-height:12px;font-size:10px;color:#e0e0e0;">Space</div>
<div class="t" style="right:224.70000000000005px;text-align:right;top:145.94px;line-height:12px;font-size:10px;color:#e0e0e0;">Translate</div>
<div class="t" style="right:224.70000000000005px;text-align:right;top:169.94px;line-height:12px;font-size:10px;color:#e0e0e0;">Rotate</div>
<div class="t" style="right:224.70000000000005px;text-align:right;top:193.94px;line-height:12px;font-size:10px;color:#e0e0e0;">Scale</div>
<div class="t" style="right:224.70000000000005px;text-align:right;top:218.03px;line-height:12px;font-size:10px;color:#e0e0e0;">Pivot</div>
<div class="a" style="left:1063px;top:119px;width:197px;height:16px;border-radius:3px;background:linear-gradient(#666,#505050);box-shadow:0 1px 0 #2e2e2e, inset 0 1px 0 #6e6e6e"></div>
<div class="t" style="left:1066px;top:121.03px;line-height:12px;font-size:10px;color:#e2e2e2;">Local</div>
<svg class="a" style="left:1245px;top:123px" width="10" height="9" viewBox="0 0 10 9"><path d="M1 1H9L5 7.5Z" fill="#ececec" stroke="#2a2a2a" stroke-width="0.5"/></svg>
<div class="a" style="left:1062.25px;top:143.5px;width:63px;height:16.5px;border-radius:2.5px;background:#5e5e5e;box-shadow:0 1px 0 #363636"></div>
<div class="t" style="left:1065.25px;top:145.84px;line-height:12px;font-size:10px;color:#e2e2e2;">0</div>
<div class="a" style="left:1130.5px;top:143.5px;width:63px;height:16.5px;border-radius:2.5px;background:#505050;box-shadow:none"></div>
<div class="t" style="left:1133.5px;top:145.84px;line-height:12px;font-size:10px;color:#e2e2e2;">-0.8824</div>
<div class="a" style="left:1198.5px;top:143.5px;width:63px;height:16.5px;border-radius:2.5px;background:#5e5e5e;box-shadow:0 1px 0 #363636"></div>
<div class="t" style="left:1201.5px;top:145.84px;line-height:12px;font-size:10px;color:#e2e2e2;">0</div>
<div class="a" style="left:1062.25px;top:167.5px;width:63px;height:16.5px;border-radius:2.5px;background:#5e5e5e;box-shadow:0 1px 0 #363636"></div>
<div class="t" style="left:1065.25px;top:169.84px;line-height:12px;font-size:10px;color:#e2e2e2;">0</div>
<div class="a" style="left:1130.5px;top:167.5px;width:63px;height:16.5px;border-radius:2.5px;background:#5e5e5e;box-shadow:0 1px 0 #363636"></div>
<div class="t" style="left:1133.5px;top:169.84px;line-height:12px;font-size:10px;color:#e2e2e2;">0</div>
<div class="a" style="left:1198.5px;top:167.5px;width:63px;height:16.5px;border-radius:2.5px;background:#5e5e5e;box-shadow:0 1px 0 #363636"></div>
<div class="t" style="left:1201.5px;top:169.84px;line-height:12px;font-size:10px;color:#e2e2e2;">0</div>
<div class="a" style="left:1062.25px;top:191.5px;width:63px;height:16.5px;border-radius:2.5px;background:#5e5e5e;box-shadow:0 1px 0 #363636"></div>
<div class="t" style="left:1065.25px;top:193.84px;line-height:12px;font-size:10px;color:#e2e2e2;">1</div>
<div class="a" style="left:1130.5px;top:191.5px;width:63px;height:16.5px;border-radius:2.5px;background:#5e5e5e;box-shadow:0 1px 0 #363636"></div>
<div class="t" style="left:1133.5px;top:193.84px;line-height:12px;font-size:10px;color:#e2e2e2;">1</div>
<div class="a" style="left:1198.5px;top:191.5px;width:63px;height:16.5px;border-radius:2.5px;background:#5e5e5e;box-shadow:0 1px 0 #363636"></div>
<div class="t" style="left:1201.5px;top:193.84px;line-height:12px;font-size:10px;color:#e2e2e2;">1</div>
<div class="a" style="left:1062.25px;top:215.5px;width:63px;height:16.5px;border-radius:2.5px;background:#5e5e5e;box-shadow:0 1px 0 #363636"></div>
<div class="t" style="left:1065.25px;top:217.84px;line-height:12px;font-size:10px;color:#e2e2e2;">0</div>
<div class="a" style="left:1130.5px;top:215.5px;width:63px;height:16.5px;border-radius:2.5px;background:#5e5e5e;box-shadow:0 1px 0 #363636"></div>
<div class="t" style="left:1133.5px;top:217.84px;line-height:12px;font-size:10px;color:#e2e2e2;">0</div>
<div class="a" style="left:1198.5px;top:215.5px;width:63px;height:16.5px;border-radius:2.5px;background:#5e5e5e;box-shadow:0 1px 0 #363636"></div>
<div class="t" style="left:1201.5px;top:217.84px;line-height:12px;font-size:10px;color:#e2e2e2;">0</div>
<svg class="a" style="left:1197px;top:528px" width="12" height="12" viewBox="0 0 12 12"><path d="M0.5 1.8H11.5M0.5 6.4H11.5M0.5 11H11.5" stroke="#8a8a8a" stroke-width="1.3"/></svg>
<div class="a" style="left:1213px;top:527px;width:40px;height:15px;background:#393939;border-radius:3px"></div>
<svg class="a" style="left:1216.5px;top:527.4px" width="14" height="14" viewBox="0 0 14 14"><circle cx="7" cy="7" r="6.5" fill="#f0f0f0"/><circle cx="7" cy="7" r="4.7" fill="#1c1c1c"/><circle cx="7" cy="7" r="2.1" fill="#f0f0f0"/></svg>
<svg class="a" style="left:1235.5px;top:530px" width="8" height="7" viewBox="0 0 8 7"><path d="M0.8 0.8H7.2L4 6Z" fill="#f0f0f0"/></svg>
<svg class="a" style="left:1257.5px;top:528px" width="14" height="14" viewBox="0 0 14 14"><rect x="0" y="0" width="13.5" height="13.5" fill="#474747"/><rect x="0" y="0" width="6.2" height="6.2" fill="#6a6a6a"/><rect x="7.2" y="0" width="6.3" height="6.2" fill="#6a6a6a"/><rect x="0" y="7.2" width="6.2" height="6.3" fill="#6a6a6a"/><rect x="7.2" y="7.2" width="6.3" height="6.3" fill="#6a6a6a"/></svg>
<svg class="a" style="left:902px;top:553px" width="12" height="12" viewBox="0 0 12 12"><path d="M6 0.8 L7.4 4.4 L11.2 4.5 L8.2 6.9 L9.3 10.6 L6 8.5 L2.7 10.6 L3.8 6.9 L0.8 4.5 L4.6 4.4 Z" fill="#9a9a9a"/></svg>
<div class="a" style="left:921px;top:550px;width:1px;height:19px;background:#3c3c3c;"></div>
<div class="a" style="left:926.5px;top:550.5px;width:289.5px;height:16.5px;border-radius:2.5px;background:#5c5c5c"></div>
<div class="t" style="left:929.5px;top:553.03px;line-height:12px;font-size:10px;color:#9a9a9a;">Filter...</div>
<div class="a" style="left:1222px;top:551px;width:45px;height:16px;border-radius:3px;background:linear-gradient(#5a5a5a,#4e4e4e);box-shadow:0 1px 0 #2e2e2e, inset 0 1px 0 #666"></div>
<div class="t" style="left:1225px;top:552.63px;line-height:12px;font-size:10px;color:#e4e4e4;font-weight:bold;">Sets</div>
<svg class="a" style="left:1252px;top:555px" width="10" height="9" viewBox="0 0 10 9"><path d="M1 1H9L5 7.5Z" fill="#ececec" stroke="#2a2a2a" stroke-width="0.5"/></svg>
<div class="a" style="left:901px;top:573px;width:367.5px;height:22px;background:#565656;"></div>
<div class="t" style="left:906px;top:578.53px;line-height:12px;font-size:10px;color:#e6e6e6;font-weight:bold;">Name</div>
<div class="a" style="left:1211px;top:574px;width:1px;height:21px;background:#323232;"></div>
<div class="a" style="left:1239px;top:574px;width:1px;height:21px;background:#323232;"></div>
<svg class="a" style="left:1208px;top:570px" width="60" height="30" viewBox="0 0 60 30">
<path d="M16 7.6 L8.9 10 L9.6 18.8 L16 21.9 L22.4 18.8 L23 10 Z" fill="#a8a8a8" stroke="#3a3a3a" stroke-width="0.6"/>
<path d="M16 9.8 L11 11.6 L11.5 17.8 L16 20 L20.5 17.8 L21 11.6 Z" fill="#5a5a5a"/>
<path d="M16 11.2 L19.3 12.5 L19.3 17 L16 18.6 L12.7 17 L12.7 12.5 Z" fill="#a4a4a4"/>
<path d="M12.7 12.5 L16 13.8 L19.3 12.5 M16 13.8 V18.6" stroke="#666" stroke-width="0.8" fill="none"/>
<path d="M43.8 7.7 L50.9 9.8 L50.6 17.8 L43.8 21.8 L37.5 17.8 L37 9.8 Z" fill="#8b5050" stroke="#3e3838" stroke-width="0.7" stroke-linejoin="round"/>
<path d="M37 9.8 L43.8 12.4 L50.9 9.8 M43.8 12.4 V21.8" stroke="#4a3838" stroke-width="0.9" fill="none"/>
</svg>
<div class="a" style="left:901px;top:596px;width:367.5px;height:22px;background:#4a4a4a;"></div>
<div class="t" style="left:924.75px;top:600.53px;line-height:12px;font-size:10px;color:#e4e4e4;">cube</div>
<div class="a" style="left:901px;top:618px;width:367.5px;height:22px;background:#434343;"></div>
<div class="t" style="left:924.75px;top:622.53px;line-height:12px;font-size:10px;color:#e4e4e4;">cube1</div>
<div class="a" style="left:901px;top:640px;width:366px;height:22px;background:#6b8aa8;"></div>
<div class="t" style="left:924.75px;top:644.53px;line-height:12px;font-size:10px;color:#e4e4e4;">cube2</div>
<div class="a" style="left:901px;top:662px;width:367.5px;height:22px;background:#434343;"></div>
<div class="t" style="left:924.75px;top:666.53px;line-height:12px;font-size:10px;color:#e4e4e4;">cube3</div>
<div class="a" style="left:901px;top:684px;width:367.5px;height:22px;background:#4a4a4a;"></div>
<div class="t" style="left:924.75px;top:688.53px;line-height:12px;font-size:10px;color:#e4e4e4;">cube4</div>
<div class="a" style="left:901px;top:706px;width:367.5px;height:22px;background:#434343;"></div>
<div class="t" style="left:924.75px;top:710.53px;line-height:12px;font-size:10px;color:#e4e4e4;">cube5</div>
<div class="a" style="left:901px;top:728px;width:367.5px;height:22px;background:#4a4a4a;"></div>
<div class="a" style="left:901px;top:750px;width:367.5px;height:22px;background:#434343;"></div>
<div class="a" style="left:901px;top:772px;width:367.5px;height:22px;background:#4a4a4a;"></div>
<div class="a" style="left:901px;top:794px;width:367.5px;height:22px;background:#434343;"></div>
<div class="a" style="left:901px;top:816px;width:367.5px;height:22px;background:#4a4a4a;"></div>
<div class="a" style="left:901px;top:838px;width:367.5px;height:22px;background:#434343;"></div>
<div class="a" style="left:901px;top:860px;width:367.5px;height:22px;background:#4a4a4a;"></div>
<div class="a" style="left:901px;top:882px;width:367.5px;height:22px;background:#434343;"></div>
<div class="a" style="left:901px;top:904px;width:367.5px;height:22px;background:#4a4a4a;"></div>
<div class="a" style="left:901px;top:926px;width:367.5px;height:11px;background:#434343;"></div>
<div class="a" style="left:901px;top:595px;width:367.5px;height:1px;background:#363636;"></div>
<div class="a" style="left:1211px;top:596px;width:1px;height:341px;background:rgba(0,0,0,0.12);"></div>
<div class="a" style="left:1239px;top:596px;width:1px;height:341px;background:rgba(0,0,0,0.12);"></div>
<div class="a" style="left:901px;top:595px;width:1px;height:342.5px;background:#595959;"></div>
<div class="a" style="left:1267.5px;top:573px;width:1px;height:364px;background:#4a4a4a;"></div>
<div class="a" style="left:901px;top:937px;width:367.5px;height:1px;background:#3c3c3c;"></div>
<div class="a" style="left:11.5px;top:954.7px;width:2.6px;height:2.6px;border-radius:1.3px;background:#3a3a3a"></div>
<div class="a" style="left:11.5px;top:960.7px;width:2.6px;height:2.6px;border-radius:1.3px;background:#3a3a3a"></div>
<div class="a" style="left:11.5px;top:966.7px;width:2.6px;height:2.6px;border-radius:1.3px;background:#3a3a3a"></div>
<div class="a" style="left:18.5px;top:953px;width:30px;height:17px;border-radius:2.5px;background:#5e5e5e;box-shadow:0 1px 0 #353535"></div>
<div class="t" style="left:21.5px;top:955.03px;line-height:12px;font-size:10px;color:#e0e0e0;">1</div>
<div class="a" style="left:52.5px;top:953px;width:30px;height:17px;border-radius:2.5px;background:#5e5e5e;box-shadow:0 1px 0 #353535"></div>
<div class="t" style="left:55.5px;top:955.03px;line-height:12px;font-size:10px;color:#e0e0e0;">1</div>
<div class="a" style="left:86px;top:953px;width:2px;height:18px;background:#f2e030;"></div>
<div class="t" style="left:92.3px;top:954.33px;line-height:12px;font-size:10px;color:#d8c030;font-weight:bold;">1</div>
<svg class="a" style="left:0;top:0" width="1280" height="987" viewBox="0 0 1280 987">
<rect x="94.90" y="965.4" width="2" height="5.6" fill="#1f1f1f"/>
<rect x="105.34" y="965.4" width="2" height="5.6" fill="#1f1f1f"/>
<rect x="115.79" y="965.4" width="2" height="5.6" fill="#1f1f1f"/>
<rect x="126.23" y="965.4" width="2" height="5.6" fill="#1f1f1f"/>
<rect x="136.68" y="960.2" width="2" height="10.8" fill="#1f1f1f"/>
<rect x="147.13" y="965.4" width="2" height="5.6" fill="#1f1f1f"/>
<rect x="157.57" y="965.4" width="2" height="5.6" fill="#1f1f1f"/>
<rect x="168.02" y="965.4" width="2" height="5.6" fill="#1f1f1f"/>
<rect x="178.46" y="965.4" width="2" height="5.6" fill="#1f1f1f"/>
<rect x="188.91" y="956.4" width="2" height="14.6" fill="#1f1f1f"/>
<rect x="199.36" y="965.4" width="2" height="5.6" fill="#1f1f1f"/>
<rect x="209.80" y="965.4" width="2" height="5.6" fill="#1f1f1f"/>
<rect x="220.25" y="965.4" width="2" height="5.6" fill="#1f1f1f"/>
<rect x="230.69" y="965.4" width="2" height="5.6" fill="#1f1f1f"/>
<rect x="241.14" y="960.2" width="2" height="10.8" fill="#1f1f1f"/>
<rect x="251.59" y="965.4" width="2" height="5.6" fill="#1f1f1f"/>
<rect x="262.03" y="965.4" width="2" height="5.6" fill="#1f1f1f"/>
<rect x="272.48" y="965.4" width="2" height="5.6" fill="#1f1f1f"/>
<rect x="282.92" y="965.4" width="2" height="5.6" fill="#1f1f1f"/>
<rect x="293.37" y="956.4" width="2" height="14.6" fill="#1f1f1f"/>
<rect x="303.82" y="965.4" width="2" height="5.6" fill="#1f1f1f"/>
<rect x="314.26" y="965.4" width="2" height="5.6" fill="#1f1f1f"/>
<rect x="324.71" y="965.4" width="2" height="5.6" fill="#1f1f1f"/>
<rect x="335.15" y="965.4" width="2" height="5.6" fill="#1f1f1f"/>
<rect x="345.60" y="960.2" width="2" height="10.8" fill="#1f1f1f"/>
<rect x="356.05" y="965.4" width="2" height="5.6" fill="#1f1f1f"/>
<rect x="366.49" y="965.4" width="2" height="5.6" fill="#1f1f1f"/>
<rect x="376.94" y="965.4" width="2" height="5.6" fill="#1f1f1f"/>
<rect x="387.38" y="965.4" width="2" height="5.6" fill="#1f1f1f"/>
<rect x="397.83" y="956.4" width="2" height="14.6" fill="#1f1f1f"/>
<rect x="408.28" y="965.4" width="2" height="5.6" fill="#1f1f1f"/>
<rect x="418.72" y="965.4" width="2" height="5.6" fill="#1f1f1f"/>
<rect x="429.17" y="965.4" width="2" height="5.6" fill="#1f1f1f"/>
<rect x="439.61" y="965.4" width="2" height="5.6" fill="#1f1f1f"/>
<rect x="450.06" y="960.2" width="2" height="10.8" fill="#1f1f1f"/>
<rect x="460.51" y="965.4" width="2" height="5.6" fill="#1f1f1f"/>
<rect x="470.95" y="965.4" width="2" height="5.6" fill="#1f1f1f"/>
<rect x="481.40" y="965.4" width="2" height="5.6" fill="#1f1f1f"/>
<rect x="491.84" y="965.4" width="2" height="5.6" fill="#1f1f1f"/>
<rect x="502.29" y="956.4" width="2" height="14.6" fill="#1f1f1f"/>
<rect x="512.74" y="965.4" width="2" height="5.6" fill="#1f1f1f"/>
<rect x="523.18" y="965.4" width="2" height="5.6" fill="#1f1f1f"/>
<rect x="533.63" y="965.4" width="2" height="5.6" fill="#1f1f1f"/>
<rect x="544.07" y="965.4" width="2" height="5.6" fill="#1f1f1f"/>
<rect x="554.52" y="960.2" width="2" height="10.8" fill="#1f1f1f"/>
<rect x="564.97" y="965.4" width="2" height="5.6" fill="#1f1f1f"/>
<rect x="575.41" y="965.4" width="2" height="5.6" fill="#1f1f1f"/>
<rect x="585.86" y="965.4" width="2" height="5.6" fill="#1f1f1f"/>
<rect x="596.30" y="965.4" width="2" height="5.6" fill="#1f1f1f"/>
<rect x="606.75" y="956.4" width="2" height="14.6" fill="#1f1f1f"/>
<rect x="617.20" y="965.4" width="2" height="5.6" fill="#1f1f1f"/>
<rect x="627.64" y="965.4" width="2" height="5.6" fill="#1f1f1f"/>
<rect x="638.09" y="965.4" width="2" height="5.6" fill="#1f1f1f"/>
<rect x="648.53" y="965.4" width="2" height="5.6" fill="#1f1f1f"/>
<rect x="658.98" y="960.2" width="2" height="10.8" fill="#1f1f1f"/>
<rect x="669.43" y="965.4" width="2" height="5.6" fill="#1f1f1f"/>
<rect x="679.87" y="965.4" width="2" height="5.6" fill="#1f1f1f"/>
<rect x="690.32" y="965.4" width="2" height="5.6" fill="#1f1f1f"/>
<rect x="700.76" y="965.4" width="2" height="5.6" fill="#1f1f1f"/>
<rect x="711.21" y="956.4" width="2" height="14.6" fill="#1f1f1f"/>
<rect x="721.66" y="965.4" width="2" height="5.6" fill="#1f1f1f"/>
<rect x="732.10" y="965.4" width="2" height="5.6" fill="#1f1f1f"/>
<rect x="742.55" y="965.4" width="2" height="5.6" fill="#1f1f1f"/>
<rect x="752.99" y="965.4" width="2" height="5.6" fill="#1f1f1f"/>
<rect x="763.44" y="960.2" width="2" height="10.8" fill="#1f1f1f"/>
<rect x="773.89" y="965.4" width="2" height="5.6" fill="#1f1f1f"/>
<rect x="784.33" y="965.4" width="2" height="5.6" fill="#1f1f1f"/>
<rect x="794.78" y="965.4" width="2" height="5.6" fill="#1f1f1f"/>
<rect x="805.22" y="965.4" width="2" height="5.6" fill="#1f1f1f"/>
<rect x="815.67" y="956.4" width="2" height="14.6" fill="#1f1f1f"/>
<rect x="826.12" y="965.4" width="2" height="5.6" fill="#1f1f1f"/>
<rect x="836.56" y="965.4" width="2" height="5.6" fill="#1f1f1f"/>
<rect x="847.01" y="965.4" width="2" height="5.6" fill="#1f1f1f"/>
<rect x="857.45" y="965.4" width="2" height="5.6" fill="#1f1f1f"/>
<rect x="867.90" y="960.2" width="2" height="10.8" fill="#1f1f1f"/>
<rect x="878.35" y="965.4" width="2" height="5.6" fill="#1f1f1f"/>
<rect x="888.79" y="965.4" width="2" height="5.6" fill="#1f1f1f"/>
<rect x="899.24" y="965.4" width="2" height="5.6" fill="#1f1f1f"/>
<rect x="909.68" y="965.4" width="2" height="5.6" fill="#1f1f1f"/>
<rect x="920.13" y="956.4" width="2" height="14.6" fill="#1f1f1f"/>
<rect x="930.58" y="965.4" width="2" height="5.6" fill="#1f1f1f"/>
<rect x="941.02" y="965.4" width="2" height="5.6" fill="#1f1f1f"/>
<rect x="951.47" y="965.4" width="2" height="5.6" fill="#1f1f1f"/>
<rect x="961.91" y="965.4" width="2" height="5.6" fill="#1f1f1f"/>
<rect x="972.36" y="960.2" width="2" height="10.8" fill="#1f1f1f"/>
<rect x="982.81" y="965.4" width="2" height="5.6" fill="#1f1f1f"/>
<rect x="993.25" y="965.4" width="2" height="5.6" fill="#1f1f1f"/>
<rect x="1003.70" y="965.4" width="2" height="5.6" fill="#1f1f1f"/>
<rect x="1014.14" y="965.4" width="2" height="5.6" fill="#1f1f1f"/>
<rect x="1024.59" y="956.4" width="2" height="14.6" fill="#1f1f1f"/>
<rect x="1035.04" y="965.4" width="2" height="5.6" fill="#1f1f1f"/>
<rect x="1045.48" y="965.4" width="2" height="5.6" fill="#1f1f1f"/>
<rect x="1055.93" y="965.4" width="2" height="5.6" fill="#1f1f1f"/>
<rect x="1066.37" y="965.4" width="2" height="5.6" fill="#1f1f1f"/>
<rect x="1076.82" y="960.2" width="2" height="10.8" fill="#1f1f1f"/>
<rect x="1087.27" y="965.4" width="2" height="5.6" fill="#1f1f1f"/>
<rect x="1097.71" y="965.4" width="2" height="5.6" fill="#1f1f1f"/>
<rect x="1108.16" y="965.4" width="2" height="5.6" fill="#1f1f1f"/>
<rect x="1118.60" y="965.4" width="2" height="5.6" fill="#1f1f1f"/>
<path d="M1123.9 955 H1126.6 V967.6 H1123.9 Z M1126.2 961.3 L1130.4 956.2 V966.4 Z" fill="#a4a4a4"/>
<path d="M1135.2 956.3 L1143.9 961.5 L1135.2 966.9 L1137.6 961.5 Z" fill="#a4a4a4"/>
<path d="M1154.4 955 H1157 V967.6 H1154.4 Z M1154.8 961.3 L1150.7 956.2 V966.4 Z" fill="#a4a4a4"/>
</svg>
<div class="a" style="left:1161.5px;top:954px;width:38.5px;height:16px;border-radius:2.5px;background:#5e5e5e;box-shadow:0 1px 0 #353535"></div>
<div class="t" style="left:1164.8px;top:956.03px;line-height:12px;font-size:10px;color:#e0e0e0;">1</div>
<div class="a" style="left:1204px;top:954px;width:30px;height:16px;border-radius:2.5px;background:#5e5e5e;box-shadow:0 1px 0 #353535"></div>
<div class="t" style="left:1206.6px;top:956.03px;line-height:12px;font-size:10px;color:#e0e0e0;">100</div>
<div class="a" style="left:1237.5px;top:954px;width:30.5px;height:16px;border-radius:2.5px;background:#5e5e5e;box-shadow:0 1px 0 #353535"></div>
<div class="t" style="left:1240.2px;top:956.03px;line-height:12px;font-size:10px;color:#e0e0e0;">100</div>
</body></html>
